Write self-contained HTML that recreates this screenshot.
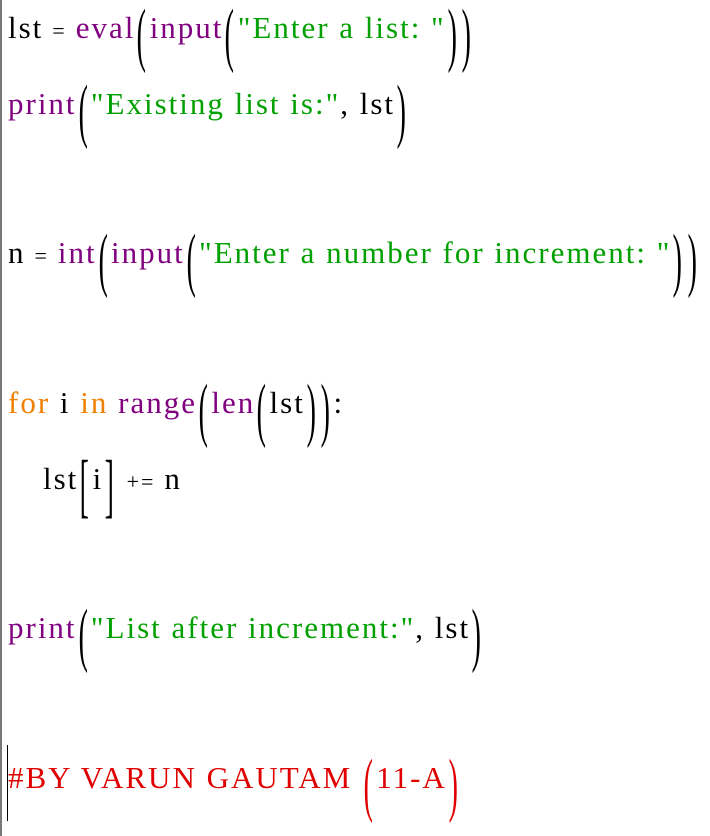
<!DOCTYPE html>
<html><head><meta charset="utf-8"><style>
body{margin:0;width:710px;height:836px;background:#fff;position:relative;overflow:hidden;font-family:"Liberation Serif","DejaVu Serif",serif;font-size:31px;}
.bar{position:absolute;left:0;top:0;width:2px;height:836px;background:#777;}
.l{position:absolute;left:8px;white-space:pre;line-height:40px;height:40px;letter-spacing:2px;}
.p{color:#800080}.g{color:#00a000}.o{color:#f08000}.r{color:#e00000}
.b{display:inline-block;transform:scale(0.9,2.3) translateY(3px);margin:0 1px;font-weight:300;}
.s{font-size:22px;margin:0 9px 0 9px}
.cur{position:absolute;left:7px;top:745px;width:1px;height:76px;background:#000}
</style></head><body>
<div class="bar"></div>
<div class="l" style="top:8px">lst<span class="s">=</span><span class="p">eval</span><span class="b">(</span><span class="p">input</span><span class="b">(</span><span class="g">"Enter a list: "</span><span class="b">)</span><span class="b">)</span></div>
<div class="l" style="top:84px"><span class="p">print</span><span class="b">(</span><span class="g">"Existing list is:"</span>, lst<span class="b">)</span></div>
<div class="l" style="top:233px">n<span class="s">=</span><span class="p">int</span><span class="b">(</span><span class="p">input</span><span class="b">(</span><span class="g">"Enter a number for increment: "</span><span class="b">)</span><span class="b">)</span></div>
<div class="l" style="top:383px"><span class="o">for</span> i <span class="o">in</span> <span class="p">range</span><span class="b">(</span><span class="p">len</span><span class="b">(</span>lst<span class="b">)</span><span class="b">)</span>:</div>
<div class="l" style="top:459px;left:43px">lst<span class="b">[</span>i<span class="b">]</span><span class="s">+=</span>n</div>
<div class="l" style="top:608px"><span class="p">print</span><span class="b">(</span><span class="g">"List after increment:"</span>, lst<span class="b">)</span></div>
<div class="l r" style="top:758px">#BY VARUN GAUTAM <span class="b">(</span>11-A<span class="b">)</span></div>
<div class="cur"></div>
</body></html>
